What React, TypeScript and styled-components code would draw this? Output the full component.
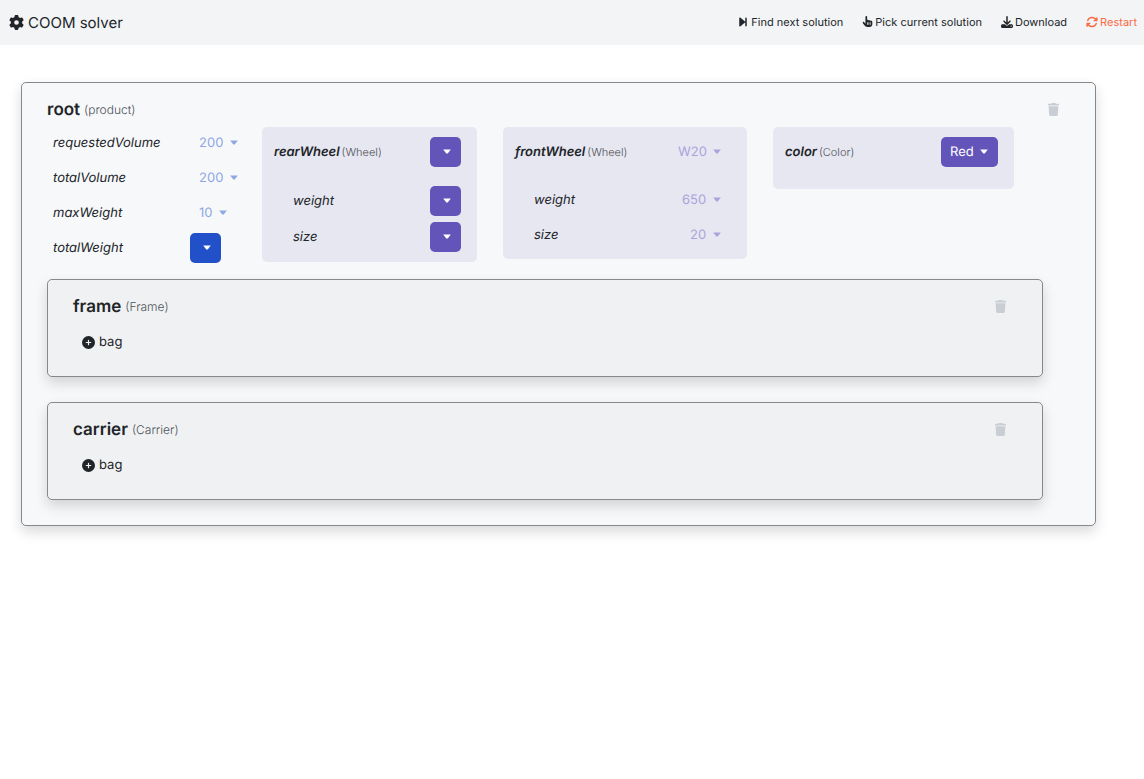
import React from "react";
import styled, { createGlobalStyle } from "styled-components";
import {
  FaArrowsRotate,
  FaCirclePlus,
  FaDownload,
  FaForwardStep,
  FaGear,
  FaHandPointer,
  FaTrash,
} from "react-icons/fa6";

const GlobalStyle = createGlobalStyle`
  *, *::before, *::after { box-sizing: border-box; }
  body {
    margin: 0;
    background: #fff;
    color: #212529;
    font-family: Inter, "Liberation Sans", sans-serif;
    font-size: 13px;
    line-height: 20px;
    text-rendering: geometricPrecision;
  }
  button, select {
    font: inherit;
    color: inherit;
    text-rendering: inherit;
  }
`;

const Header = styled.header`
  display: flex;
  align-items: center;
  justify-content: space-between;
  height: 45px;
  padding: 0 7px 2px 9px;
  background: #f3f4f6;
`;

const Brand = styled.h1`
  display: flex;
  align-items: center;
  gap: 4px;
  margin: 0;
  padding-top: 2px;
  font-size: 15px;
  font-weight: 400;
`;

const Toolbar = styled.nav`
  display: flex;
  gap: 19px;
`;

const ToolButton = styled.button<{ $accent?: boolean }>`
  display: flex;
  align-items: center;
  gap: 2px;
  padding: 0;
  border: 0;
  background: none;
  font-size: 11px;
  line-height: 16px;
  color: ${(p) => (p.$accent ? "#f96b45" : "#212529")};
`;

const Main = styled.main`
  padding: 37px 48px 48px 21px;
`;

const Card = styled.section<{ $nested?: boolean }>`
  padding: ${(p) => (p.$nested ? "15px 25px 24px" : "15px 25px 25px")};
  margin-right: ${(p) => (p.$nested ? "27px" : "0")};
  border: 1px solid #86888c;
  border-radius: 5px;
  background: ${(p) => (p.$nested ? "#f0f1f3" : "#f7f8fa")};
  box-shadow: 0 6px 13px rgba(0, 0, 0, 0.15);
`;

const CardHead = styled.div`
  display: flex;
  align-items: center;
  justify-content: space-between;
  height: 24px;
  padding-right: 10px;
`;

const CardTitle = styled.h2`
  display: flex;
  align-items: center;
  gap: 4px;
  margin: 0;
  font-size: 17px;
  line-height: 24px;
  font-weight: 600;
`;

const TypeName = styled.span<{ $small?: boolean }>`
  font-size: ${(p) => (p.$small ? "11px" : "12px")};
  font-style: normal;
  font-weight: 300;
  color: #4d5156;
`;

const IconButton = styled.button`
  display: flex;
  padding: 0 0 1px;
  border: 0;
  background: none;
  color: #c9ced4;
`;

const Attributes = styled.div`
  display: flex;
  align-items: flex-start;
  gap: 26px;
  margin: 5px 0 16px;
`;

const PlainFields = styled.div`
  display: grid;
  gap: 6px;
  width: 189px;
  padding: 1px 0 0 6px;
`;

const Group = styled.div<{ $width: number }>`
  width: ${(p) => p.$width}px;
  padding: 10px 16px 10px 12px;
  border-radius: 5px;
  background: #e7e7f1;
`;

const GroupHead = styled.div<{ $alone?: boolean }>`
  display: flex;
  align-items: center;
  justify-content: space-between;
  margin-bottom: ${(p) => (p.$alone ? "12px" : "19px")};
`;

const GroupName = styled.label`
  display: flex;
  align-items: center;
  gap: 2px;
  font-style: italic;
  font-weight: 600;
`;

const GroupFields = styled.div`
  display: grid;
  gap: 6px;
  padding-left: 19px;
`;

const PlainRow = styled.div`
  display: grid;
  grid-template-columns: 137px auto;
  align-items: center;
  justify-content: start;
`;

const GroupRow = styled.div`
  display: flex;
  align-items: center;
  justify-content: space-between;
`;

const FieldName = styled.label`
  font-style: italic;
`;

type Tone = "blue" | "violet";

const solid = { blue: "#2150c8", violet: "#6354b9" };
const faded = { blue: "#8fa7e3", violet: "#aba3dc" };

const SelectBox = styled.span<{ $tone: Tone; $faded?: boolean }>`
  position: relative;
  display: inline-flex;
  justify-self: start;
  color: ${(p) => (p.$faded ? faded[p.$tone] : "#fff")};
`;

const Select = styled.select<{ $tone: Tone; $faded?: boolean }>`
  appearance: none;
  height: ${(p) => (p.$faded ? "29px" : "30px")};
  padding: 0 24px 0 9px;
  border: 0;
  border-radius: 5px;
  background: ${(p) => (p.$faded ? "transparent" : solid[p.$tone])};

  &[data-empty="true"] {
    width: 31px;
    padding: 0;
  }
`;

const Caret = styled.svg`
  position: absolute;
  top: 12px;
  right: 10px;
  pointer-events: none;
`;

const AddButton = styled.button`
  display: flex;
  align-items: center;
  gap: 4px;
  margin: 13px 0 0 9px;
  padding: 0;
  border: 0;
  background: none;
`;

const Children = styled.div`
  display: grid;
  gap: 25px;
`;

interface DropdownProps {
  id: string;
  value?: string;
  tone: Tone;
  isFaded?: boolean;
}

function Dropdown({ id, value = "", tone, isFaded }: DropdownProps) {
  return (
    <SelectBox $tone={tone} $faded={isFaded}>
      <Select id={id} data-empty={value === ""} defaultValue={value} $tone={tone} $faded={isFaded}>
        <option value={value}>{value}</option>
      </Select>
      <Caret width="8" height="5" viewBox="0 0 8 5" aria-hidden="true">
        <path d="M.2 .4h7.6L4.7 4.4h-1.4z" fill="currentColor" />
      </Caret>
    </SelectBox>
  );
}

interface Field {
  name: string;
  value?: string;
}

const rootFields: Field[] = [
  { name: "requestedVolume", value: "200" },
  { name: "totalVolume", value: "200" },
  { name: "maxWeight", value: "10" },
  { name: "totalWeight" },
];

interface FeatureGroup {
  name: string;
  type: string;
  value?: string;
  inferred?: boolean;
  width: number;
  fields: Field[];
}

const groups: FeatureGroup[] = [
  {
    name: "rearWheel",
    type: "Wheel",
    width: 215,
    fields: [{ name: "weight" }, { name: "size" }],
  },
  {
    name: "frontWheel",
    type: "Wheel",
    value: "W20",
    inferred: true,
    width: 244,
    fields: [
      { name: "weight", value: "650" },
      { name: "size", value: "20" },
    ],
  },
  { name: "color", type: "Color", value: "Red", width: 241, fields: [] },
];

function Trash({ of }: { of: string }) {
  return (
    <IconButton aria-label={`Remove ${of}`}>
      <FaTrash size={13} />
    </IconButton>
  );
}

function Part({ name, type }: { name: string; type: string }) {
  return (
    <Card $nested>
      <CardHead>
        <CardTitle>
          {name} <TypeName>({type})</TypeName>
        </CardTitle>
        <Trash of={name} />
      </CardHead>
      <AddButton>
        <FaCirclePlus size={13} />
        bag
      </AddButton>
    </Card>
  );
}

export default function App() {
  return (
    <>
      <GlobalStyle />
      <Header>
        <Brand>
          <FaGear size={15} />
          COOM solver
        </Brand>
        <Toolbar>
          <ToolButton>
            <FaForwardStep size={12} />
            Find next solution
          </ToolButton>
          <ToolButton>
            <FaHandPointer size={11} />
            Pick current solution
          </ToolButton>
          <ToolButton>
            <FaDownload size={12} />
            Download
          </ToolButton>
          <ToolButton $accent>
            <FaArrowsRotate size={12} />
            Restart
          </ToolButton>
        </Toolbar>
      </Header>
      <Main>
        <Card>
          <CardHead>
            <CardTitle>
              root <TypeName>(product)</TypeName>
            </CardTitle>
            <Trash of="root" />
          </CardHead>
          <Attributes>
            <PlainFields>
              {rootFields.map((f) => (
                <PlainRow key={f.name}>
                  <FieldName htmlFor={f.name}>{f.name}</FieldName>
                  <Dropdown id={f.name} value={f.value} tone="blue" isFaded={!!f.value} />
                </PlainRow>
              ))}
            </PlainFields>
            {groups.map((g) => (
              <Group key={g.name} $width={g.width}>
                <GroupHead $alone={g.fields.length === 0}>
                  <GroupName htmlFor={g.name}>
                    {g.name} <TypeName $small>({g.type})</TypeName>
                  </GroupName>
                  <Dropdown id={g.name} value={g.value} tone="violet" isFaded={g.inferred} />
                </GroupHead>
                {g.fields.length > 0 && (
                  <GroupFields>
                    {g.fields.map((f) => (
                      <GroupRow key={f.name}>
                        <FieldName htmlFor={`${g.name}-${f.name}`}>{f.name}</FieldName>
                        <Dropdown
                          id={`${g.name}-${f.name}`}
                          value={f.value}
                          tone="violet"
                          isFaded={g.inferred}
                        />
                      </GroupRow>
                    ))}
                  </GroupFields>
                )}
              </Group>
            ))}
          </Attributes>
          <Children>
            <Part name="frame" type="Frame" />
            <Part name="carrier" type="Carrier" />
          </Children>
        </Card>
      </Main>
    </>
  );
}
